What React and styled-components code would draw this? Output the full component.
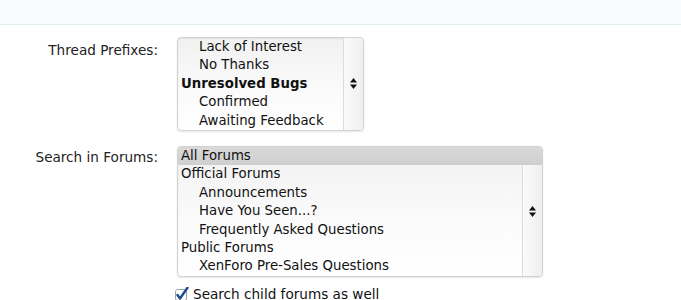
import React from "react";
import styled, { createGlobalStyle } from "styled-components";

const Global = createGlobalStyle`
  html, body { margin: 0; padding: 0; background: #fff; }
  body { font-family: "DejaVu Sans", Verdana, sans-serif; font-size: 13.6px; color: #111; }
`;

const Header = styled.div`
  height: 24px;
  background: #fafbfd;
  border-bottom: 1px solid #dfedf2;
`;

const Form = styled.div`
  display: grid;
  grid-template-columns: 158px auto;
  column-gap: 19px;
  padding-top: 12px;
`;

const Label = styled.div`
  text-align: right;
  color: #222;
  padding-top: ${(p) => p.$top || 5}px;
`;

const Field = styled.div`
  margin-bottom: ${(p) => p.$mb || 0}px;
`;

const ListBox = styled.div`
  position: relative;
  width: ${(p) => p.$w}px;
  box-sizing: border-box;
  border: 1px solid #d2d2d2;
  border-radius: 4px;
  background: linear-gradient(#f1f1f1, #fbfbfb 60%, #ffffff);
  box-shadow: 0 1px 2px rgba(0, 0, 0, 0.1), inset 0 1px 2px rgba(0, 0, 0, 0.07);
  display: flex;
  overflow: hidden;
  font-size: 13.3px;
`;

const Items = styled.div`
  flex: 1;
  display: flex;
  flex-direction: column;
`;

const Item = styled.div`
  height: 18.4px;
  line-height: 18.4px;
  padding-left: ${(p) => (p.$indent ? 21 : 3)}px;
  font-weight: ${(p) => (p.$bold ? 700 : 400)};
  background: ${(p) => (p.$sel ? "linear-gradient(#d9d9d9, #cfcfcf)" : "transparent")};
  margin-right: ${(p) => (p.$sel ? -20 : 0)}px;
  position: relative;
  z-index: 1;
  white-space: nowrap;
  color: #111;
`;

const ScrollCol = styled.div`
  width: 19px;
  border-left: 1px solid #dcdcdc;
  background: linear-gradient(90deg, #fafafa, #efefef);
  display: flex;
  align-items: center;
  justify-content: center;
`;

const CheckRow = styled.label`
  display: flex;
  align-items: center;
  gap: 3px;
  margin-top: 9px;
  margin-left: -2px;
  color: #111;
`;

const Arrows = () => (
  <svg width="7" height="11" viewBox="0 0 7 11">
    <path d="M3.5 0 L7 4.5 L0 4.5 Z" fill="#111" />
    <path d="M0 6.5 L7 6.5 L3.5 11 Z" fill="#111" />
  </svg>
);

const Check = () => (
  <svg width="15" height="14" viewBox="0 0 15 14">
    <rect x="0.5" y="2.5" width="11" height="11" rx="2" fill="#fff" stroke="#9aa3b0" />
    <path d="M2.5 8 L5 11.5 L12.5 0.8" fill="none" stroke="#1d4f8f" strokeWidth="2.4" strokeLinecap="round" strokeLinejoin="round" />
  </svg>
);

const prefixes = [
  { t: "Lack of Interest", indent: true },
  { t: "No Thanks", indent: true },
  { t: "Unresolved Bugs", bold: true },
  { t: "Confirmed", indent: true },
  { t: "Awaiting Feedback", indent: true },
];

const forums = [
  { t: "All Forums", sel: true },
  { t: "Official Forums" },
  { t: "Announcements", indent: true },
  { t: "Have You Seen...?", indent: true },
  { t: "Frequently Asked Questions", indent: true },
  { t: "Public Forums" },
  { t: "XenForo Pre-Sales Questions", indent: true },
];

const List = ({ items, w }) => (
  <ListBox $w={w}>
    <Items>
      {items.map((i) => (
        <Item key={i.t} $indent={i.indent} $bold={i.bold} $sel={i.sel}>
          {i.t}
        </Item>
      ))}
    </Items>
    <ScrollCol>
      <Arrows />
    </ScrollCol>
  </ListBox>
);

export default function App() {
  return (
    <>
      <Global />
      <Header />
      <Form>
        <Label $top={5}>Thread Prefixes:</Label>
        <Field $mb={15}>
          <List items={prefixes} w={187} />
        </Field>
        <Label $top={3}>Search in Forums:</Label>
        <Field>
          <List items={forums} w={366} />
          <CheckRow>
            <Check />
            Search child forums as well
          </CheckRow>
        </Field>
      </Form>
    </>
  );
}
